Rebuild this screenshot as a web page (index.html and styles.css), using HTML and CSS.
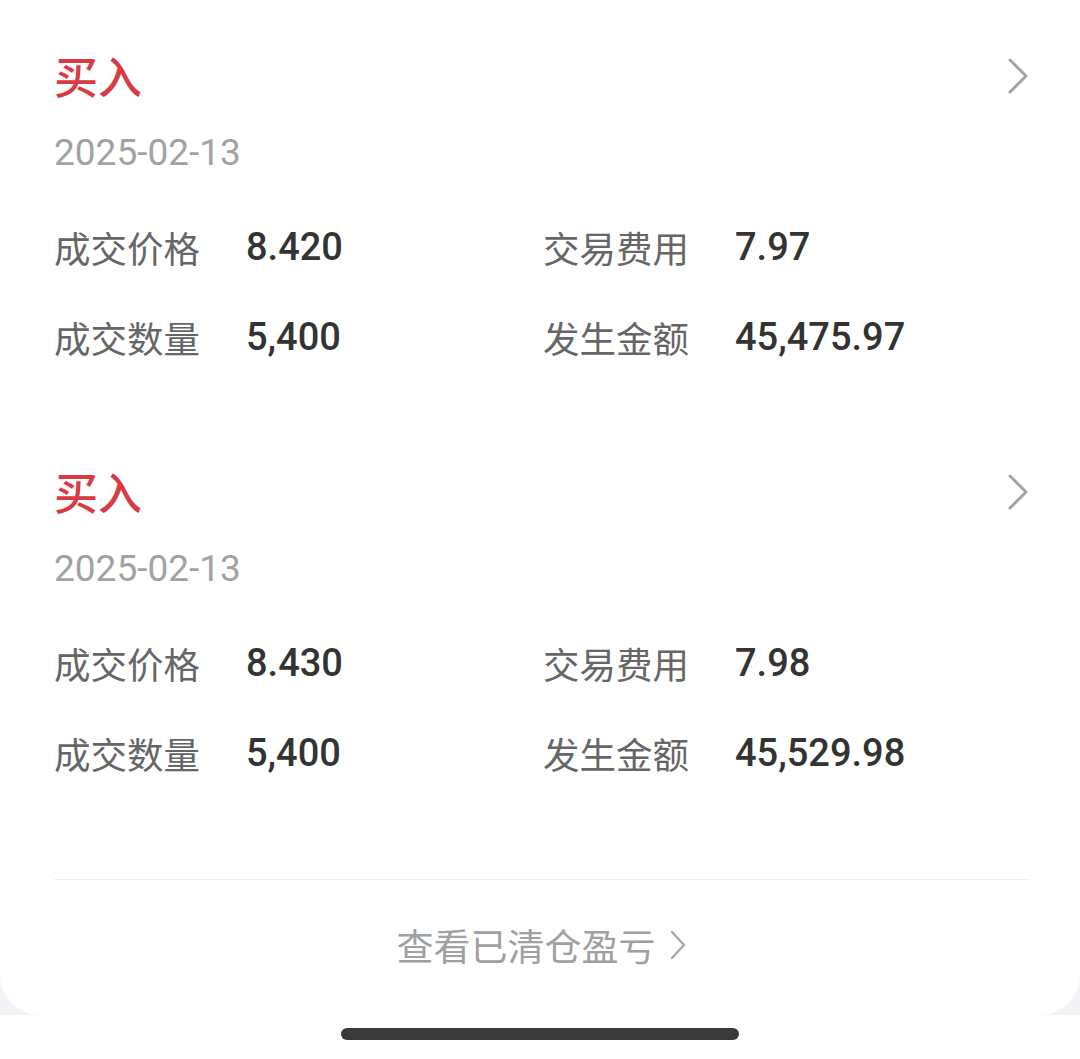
FILE: index.html
```html
<!DOCTYPE html>
<html lang="zh-CN">

<head>
    <meta charset="UTF-8">
    <meta name="viewport" content="width=device-width, initial-scale=1.0">
    <title>成交记录</title>
    <link rel="stylesheet" href="styles.css">
</head>

<body>
    <div class="card">
        <!-- 第一笔成交 -->
        <div class="trade">
            <div class="trade-head">
                <span class="trade-type">买入</span>
                <svg class="arrow" width="24" height="38" viewBox="0 0 24 38">
                    <polyline points="4,3 20,19 4,35" fill="none" stroke="#a3a3a3" stroke-width="3" stroke-linecap="round" stroke-linejoin="round" />
                </svg>
            </div>
            <div class="trade-date">2025-02-13</div>
            <div class="trade-info">
                <div class="cell"><span class="label">成交价格</span><span class="value">8.420</span></div>
                <div class="cell"><span class="label">交易费用</span><span class="value">7.97</span></div>
                <div class="cell"><span class="label">成交数量</span><span class="value">5,400</span></div>
                <div class="cell"><span class="label">发生金额</span><span class="value">45,475.97</span></div>
            </div>
        </div>

        <!-- 第二笔成交 -->
        <div class="trade">
            <div class="trade-head">
                <span class="trade-type">买入</span>
                <svg class="arrow" width="24" height="38" viewBox="0 0 24 38">
                    <polyline points="4,3 20,19 4,35" fill="none" stroke="#a3a3a3" stroke-width="3" stroke-linecap="round" stroke-linejoin="round" />
                </svg>
            </div>
            <div class="trade-date">2025-02-13</div>
            <div class="trade-info">
                <div class="cell"><span class="label">成交价格</span><span class="value">8.430</span></div>
                <div class="cell"><span class="label">交易费用</span><span class="value">7.98</span></div>
                <div class="cell"><span class="label">成交数量</span><span class="value">5,400</span></div>
                <div class="cell"><span class="label">发生金额</span><span class="value">45,529.98</span></div>
            </div>
        </div>

        <div class="line"></div>

        <div class="more">
            <span>查看已清仓盈亏</span>
            <svg class="more-arrow" width="20" height="32" viewBox="0 0 20 32">
                <polyline points="4,3 16,16 4,29" fill="none" stroke="#a8a8a8" stroke-width="2.4" stroke-linecap="round" stroke-linejoin="round" />
            </svg>
        </div>
    </div>

    <div class="home-bar-wrap">
        <div class="home-bar"></div>
    </div>
</body>

</html>
```

FILE: styles.css
```css
* {
    padding: 0;
    margin: 0;
    box-sizing: border-box;
}

body {
    width: 1080px;
    height: 1059px;
    background: #f3f3f7;
    font-family: "Noto Sans CJK SC", "Noto Sans", sans-serif;
    overflow: hidden;
}

.card {
    background: #fff;
    border-radius: 0 0 40px 40px;
    padding: 0 50px 45px 54px;
}

.trade {
    padding: 47px 0 51px;
}

.trade-head {
    display: flex;
    justify-content: space-between;
    align-items: center;
    height: 60px;
}

.trade-type {
    font-size: 44px;
    font-weight: 500;
    color: #d93a44;
    line-height: 60px;
    margin-top: -4px;
}

.arrow {
    display: block;
    margin-top: -3px;
}

.trade-date {
    margin-top: 21px;
    font-family: Roboto, "Liberation Sans", sans-serif;
    font-size: 37px;
    line-height: 50px;
    color: #a2a2a2;
}

.trade-info {
    margin-top: 41px;
    display: grid;
    grid-template-columns: 489px 1fr;
    row-gap: 34px;
}

.cell {
    display: flex;
    align-items: center;
    height: 56px;
}

.label {
    width: 192px;
    font-size: 36.5px;
    color: #666;
}

.value {
    font-family: Roboto, "Liberation Sans", sans-serif;
    font-size: 38px;
    font-weight: 500;
    color: #333;
}

.line {
    margin-top: 47px;
    height: 1px;
    background: #eeeeee;
}

.more {
    margin-top: 40px;
    display: flex;
    justify-content: center;
    align-items: center;
    gap: 12px;
    height: 50px;
    font-size: 37px;
    color: #a0a0a0;
}

.more-arrow {
    display: block;
}

.home-bar-wrap {
    height: 44px;
    background: #fff;
    padding-top: 13px;
}

.home-bar {
    width: 398px;
    height: 12px;
    margin: 0 auto;
    border-radius: 6px;
    background: #3a3a3a;
}
```
